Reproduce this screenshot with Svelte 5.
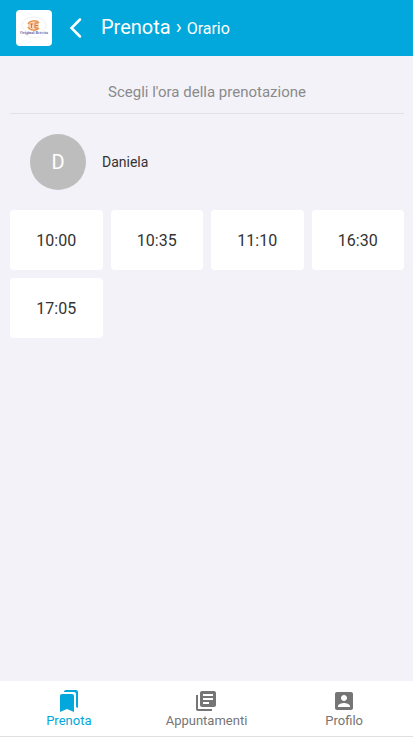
<script>
	const operator = { name: 'Daniela', initial: 'D' };
	const slots = ['10:00', '10:35', '11:10', '16:30', '17:05'];

	const tabs = [
		{
			label: 'Prenota',
			icon: 'M19 18l2 1V3c0-1.1-.9-2-2-2H8.99C7.89 1 7 1.9 7 3h10c1.1 0 2 .9 2 2v13zM15 5H5c-1.1 0-2 .9-2 2v16l7-3 7 3V7c0-1.1-.9-2-2-2z'
		},
		{
			label: 'Appuntamenti',
			icon: 'M4 6H2v14c0 1.1.9 2 2 2h14v-2H4V6zm16-4H8c-1.1 0-2 .9-2 2v12c0 1.1.9 2 2 2h12c1.1 0 2-.9 2-2V4c0-1.1-.9-2-2-2zm-1 9H9V9h10v2zm-4 4H9v-2h6v2zm4-8H9V5h10v2z'
		},
		{
			label: 'Profilo',
			icon: 'M3 5v14c0 1.1.89 2 2 2h14c1.1 0 2-.9 2-2V5c0-1.1-.9-2-2-2H5c-1.11 0-2 .9-2 2zm12 4c0 1.66-1.34 3-3 3s-3-1.34-3-3 1.34-3 3-3 3 1.34 3 3zm-9 8c0-2 4-3.1 6-3.1s6 1.1 6 3.1v1H6v-1z'
		}
	];

	let activeTab = $state('Prenota');
	let selected = $state('');
</script>

<div class="app">
	<header class="toolbar">
		<svg class="logo" viewBox="0 0 36 36" role="img" aria-label="Logo">
			<ellipse cx="18" cy="15" rx="12" ry="8" fill="none" stroke="#f0f0f4" />
			<path d="M9 24c4 4 12 5 18 1" fill="none" stroke="#f2f2f6" />
			<ellipse cx="17.5" cy="15.5" rx="5.5" ry="4.5" fill="#f8d3b4" />
			<path
				d="M12 14c2-4 9-4 11-1M12 17c2 4 9 4 11 1"
				fill="none"
				stroke="#e9944f"
				stroke-width="1.5"
			/>
			<path
				d="M14 14h3M15.5 14v4M19 13v5M19 13h3M19 15.5h3M19 18h3"
				fill="none"
				stroke="#d57a43"
			/>
			<text x="18" y="24" text-anchor="middle">Original Beretta</text>
		</svg>
		<button class="back" type="button" aria-label="Indietro">
			<svg viewBox="0 0 24 24" aria-hidden="true">
				<path d="M16 3.500L7.500 12L16 20.500" />
			</svg>
		</button>
		<h1>Prenota › <small>Orario</small></h1>
	</header>

	<main>
		<h2>Scegli l'ora della prenotazione</h2>

		<div class="operator">
			<span class="avatar" aria-hidden="true">{operator.initial}</span>
			<span>{operator.name}</span>
		</div>

		<div class="slots">
			{#each slots as slot}
				<button
					class="slot"
					type="button"
					aria-pressed={selected === slot}
					onclick={() => (selected = slot)}>{slot}</button
				>
			{/each}
		</div>
	</main>

	<nav>
		{#each tabs as tab}
			<button
				class="tab"
				class:active={activeTab === tab.label}
				type="button"
				onclick={() => (activeTab = tab.label)}
			>
				<svg viewBox="0 0 24 24" aria-hidden="true"><path d={tab.icon} /></svg>
				<span>{tab.label}</span>
			</button>
		{/each}
	</nav>
</div>

<style>
	:global(body) {
		margin: 0;
		background: #f3f2f9;
	}

	.app {
		min-height: 100vh;
		display: flex;
		flex-direction: column;
		color: #333;
		font-family: Roboto, sans-serif;
	}

	button {
		margin: 0;
		padding: 0;
		border: 0;
		background: none;
		color: inherit;
		font: inherit;
		cursor: pointer;
	}

	.toolbar {
		display: flex;
		align-items: center;
		height: 56px;
		padding: 0 16px;
		box-sizing: border-box;
		background: #02a8db;
		color: #fff;
	}

	.logo {
		width: 36px;
		height: 36px;
		border-radius: 4px;
		background: #fff;
	}

	.logo text {
		fill: #6a6aa4;
		font-family: 'Liberation Serif', serif;
		font-size: 4px;
		font-weight: 700;
	}

	.back {
		display: flex;
		margin: 0 13px 0 12px;
	}

	.back svg {
		width: 24px;
		height: 24px;
		fill: none;
		stroke: #fff;
		stroke-width: 2.5;
		stroke-linecap: round;
	}

	h1 {
		margin: 0;
		font-size: 20px;
		font-weight: 400;
		line-height: 28px;
	}

	h1 small {
		font-size: 16px;
	}

	main {
		flex: 1;
		padding: 16px 9px 16px 10px;
	}

	h2 {
		margin: 0 0 12px;
		padding: 8px 0 9px;
		border-bottom: 1px solid #e1e1e6;
		color: #8a8a8a;
		font-size: 15px;
		font-weight: 400;
		line-height: 24px;
		text-align: center;
	}

	.operator {
		display: flex;
		align-items: center;
		gap: 16px;
		padding: 8px 20px;
		font-size: 14px;
		line-height: 20px;
	}

	.avatar {
		display: flex;
		align-items: center;
		justify-content: center;
		width: 56px;
		height: 56px;
		border-radius: 50%;
		background: #bdbdbd;
		color: #fff;
		font-size: 20px;
	}

	.slots {
		display: grid;
		grid-template-columns: repeat(4, 1fr);
		gap: 8px;
		margin-top: 12px;
	}

	.slot {
		height: 60px;
		border-radius: 4px;
		background: #fff;
		font-size: 16px;
	}

	nav {
		display: grid;
		grid-template-columns: repeat(3, 1fr);
		height: 55px;
		border-bottom: 1px solid #e0e0e0;
		background: #fff;
	}

	.tab {
		display: flex;
		flex-direction: column;
		align-items: center;
		justify-content: center;
		color: #757575;
		font-size: 13px;
		line-height: 16px;
	}

	.tab svg {
		width: 24px;
		height: 24px;
		fill: currentColor;
	}

	.tab.active {
		color: #02a8db;
	}
</style>
